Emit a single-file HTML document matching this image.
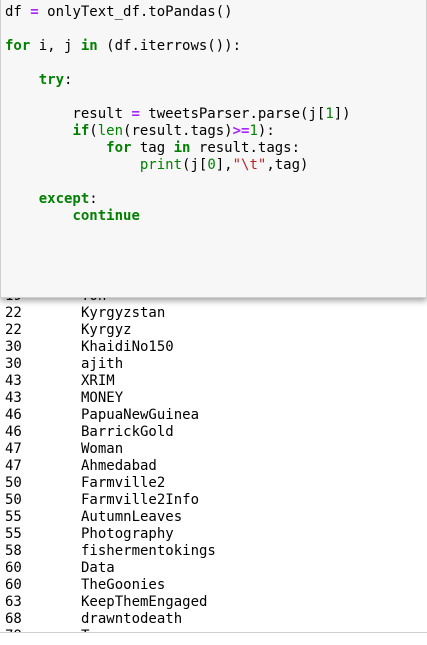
<!DOCTYPE html>
<html><head><style>
body{margin:0;width:427px;height:643px;overflow:hidden;background:#fff;position:relative;font-family:"DejaVu Sans Mono","Liberation Mono",monospace;font-size:14px;color:#000}
.panel{position:absolute;left:0;top:-2px;width:427px;height:300px;background:#f7f7f7;border:1px solid #cfcfcf;box-sizing:border-box;box-shadow:0 3px 6px rgba(0,0,0,.35);z-index:2}
pre{margin:0;font:inherit;line-height:17px;position:absolute;left:4px;top:5px}
.k{color:#008000;font-weight:bold}.o{color:#aa22ff;font-weight:bold}.b{color:#008000}.s{color:#ba2121}.n{color:#008000}
.r{position:absolute;height:17px;line-height:17px;white-space:pre}
.sep{position:absolute;left:0;top:632px;width:427px;height:11px;background:#fff;border-top:1px solid #cfcfcf;z-index:3}
</style></head><body>
<div class="panel"><pre>df <span class="o">=</span> onlyText_df.toPandas()

<span class="k">for</span> i, j <span class="k">in</span> (df.iterrows()):

    <span class="k">try</span>:

        result <span class="o">=</span> tweetsParser.parse(j[<span class="n">1</span>])
        <span class="k">if</span>(<span class="b">len</span>(result.tags)<span class="o">&gt;=</span><span class="n">1</span>):
            <span class="k">for</span> tag <span class="k">in</span> result.tags:
                <span class="b">print</span>(j[<span class="n">0</span>],<span class="s">"\t"</span>,tag)

    <span class="k">except</span>:
        <span class="k">continue</span></pre></div>
<div id="o"></div>
<div class="sep"></div>
<script>
var d=[["19","Yon"],["22","Kyrgyzstan"],["22","Kyrgyz"],["30","KhaidiNo150"],["30","ajith"],["43","XRIM"],["43","MONEY"],["46","PapuaNewGuinea"],["46","BarrickGold"],["47","Woman"],["47","Ahmedabad"],["50","Farmville2"],["50","Farmville2Info"],["55","AutumnLeaves"],["55","Photography"],["58","fishermentokings"],["60","Data"],["60","TheGoonies"],["63","KeepThemEngaged"],["68","drawntodeath"],["78","Tour"]];
var h="";d.forEach(function(r,i){var y=296+i*17-8;h+='<div class="r" style="left:5px;top:'+y+'px">'+r[0]+'</div><div class="r" style="left:81px;top:'+y+'px">'+r[1]+'</div>';});
document.getElementById("o").innerHTML=h;
</script>
</body></html>
